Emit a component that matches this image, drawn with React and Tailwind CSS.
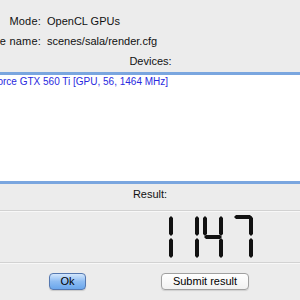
import React from "react";

// 7-segment map for the LCD result
const SEGMENTS = {
  1: ["b", "c"],
  4: ["f", "g", "b", "c"],
  7: ["a", "b", "c"],
};

const T = 3;
const B = 47;
const M = 25;
const t = 4;

function vSeg(x, y1, y2) {
  return `${x + t / 2},${y1} ${x + t},${y1 + t / 2} ${x + t},${y2 - t / 2} ${x + t / 2},${y2} ${x},${y2 - t / 2} ${x},${y1 + t / 2}`;
}

function hSeg(x1, x2, y) {
  return `${x1},${y + t / 2} ${x1 + t / 2},${y} ${x2 - t / 2},${y} ${x2},${y + t / 2} ${x2 - t / 2},${y + t} ${x1 + t / 2},${y + t}`;
}

function digitPolys(d, L, R) {
  const out = [];
  SEGMENTS[d].forEach((s) => {
    if (s === "a") out.push(hSeg(L + 1, R - 1, T));
    if (s === "g") out.push(hSeg(L + 1, R - 1, M - t / 2));
    if (s === "b") out.push(vSeg(R - t, T + 1, M - 1));
    if (s === "c") out.push(vSeg(R - t, M + 1, B - 1));
    if (s === "f") out.push(vSeg(L, T + 1, M - 1));
    if (s === "e") out.push(vSeg(L, M + 1, B - 1));
  });
  return out;
}

const DIGITS = [
  { d: 1, L: 153, R: 173 },
  { d: 1, L: 179, R: 199 },
  { d: 4, L: 203, R: 223 },
  { d: 7, L: 233, R: 253 },
];

function Lcd() {
  return (
    <svg width="300" height="50" viewBox="0 0 300 50" className="block">
      <title>1147</title>
      {DIGITS.map((g, i) =>
        digitPolys(g.d, g.L, g.R).map((p, j) => (
          <polygon key={`${i}-${j}`} points={p} fill="#111" />
        ))
      )}
    </svg>
  );
}

function Row({ label, value }) {
  return (
    <div className="flex h-[20px] items-center">
      <div className="flex w-[41px] shrink-0 justify-end whitespace-nowrap">
        <span className="tracking-[0.2px]">{label}</span>
      </div>
      <div className="ml-[6px] whitespace-nowrap">{value}</div>
    </div>
  );
}

export default function App() {
  return (
    <div
      className="w-[300px] h-[300px] overflow-hidden bg-[#ececec] text-[11px] leading-[13px] text-[#111]"
      style={{ fontFamily: '"Liberation Sans", Arial, sans-serif' }}
    >
      <div className="pt-[11px]">
        <Row label="Mode:" value="OpenCL GPUs" />
        <Row label="Scene name:" value="scenes/sala/render.cfg" />
        <div className="flex h-[20px] items-center justify-center pl-[1px]">
          Devices:
        </div>
      </div>

      <div className="mt-[1px] h-[112px] border-y-[3px] border-[#7aa6df] bg-white">
        <div className="-ml-[22px] whitespace-nowrap text-[10px] leading-[13px] text-[#2a2ae0]">
          GeForce GTX 560 Ti [GPU, 56, 1464 MHz]
        </div>
      </div>

      <div className="flex h-[21px] items-center justify-center">Result:</div>

      <div className="mt-[5px] h-px bg-[#d2d2d2]" />
      <div className="h-px bg-[#f8f8f8]" />
      <Lcd />
      <div className="h-px bg-[#d2d2d2]" />
      <div className="h-px bg-[#f8f8f8]" />

      <div className="mt-[9px] flex items-center pl-[49px]">
        <button className="flex h-[17px] w-[37px] items-center justify-center rounded-[4px] border border-[#5578b0] bg-gradient-to-b from-[#d3e6fc] via-[#8dbcf2] to-[#6aa6ec] text-[11px] text-black shadow-[0_1px_1px_rgba(0,0,0,0.15)]">
          Ok
        </button>
        <button className="ml-[75px] flex h-[17px] w-[88px] items-center justify-center rounded-[4px] border border-[#a0a0a0] bg-gradient-to-b from-white to-[#f1f1f1] text-[11px] text-black shadow-[0_1px_1px_rgba(0,0,0,0.12)]">
          Submit result
        </button>
      </div>
    </div>
  );
}
